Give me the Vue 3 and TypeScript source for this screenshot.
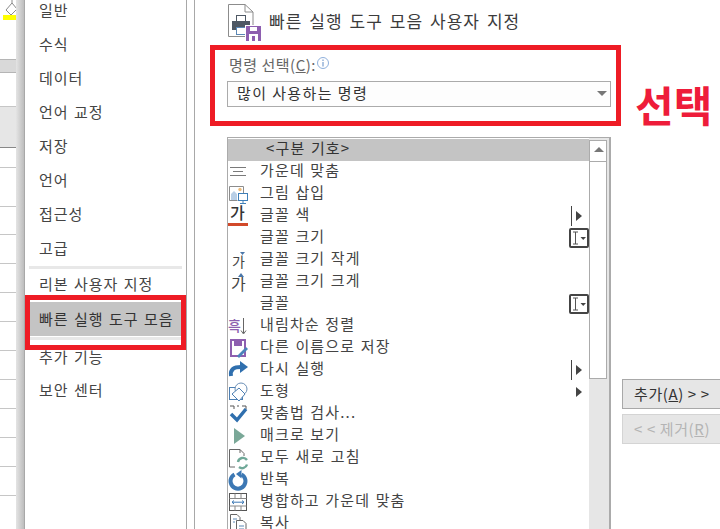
<script setup lang="ts">
interface Cmd { label: string; icon: string; mark?: string; selected?: boolean }

const navTop: string[] = ['일반', '수식', '데이터', '언어 교정', '저장', '언어', '접근성', '고급']
const navBottom: string[] = ['추가 기능', '보안 센터']
const sheetRows: { h: number; kind: string }[] = [
  { h: 60, kind: 'tool' }, { h: 13, kind: 'head' }, { h: 34, kind: '' }, { h: 41, kind: 'tint' },
  { h: 20, kind: '' }, { h: 39, kind: '' }, { h: 28, kind: '' }, { h: 29, kind: '' },
  { h: 29, kind: '' }, { h: 29, kind: '' }, { h: 29, kind: '' }, { h: 29, kind: '' },
  { h: 29, kind: '' }, { h: 29, kind: '' }, { h: 29, kind: '' }, { h: 29, kind: '' },
]
const commands: Cmd[] = [
  { label: '<구분 기호>', icon: '', selected: true },
  { label: '가운데 맞춤', icon: 'center' },
  { label: '그림 삽입', icon: 'picture' },
  { label: '글꼴 색', icon: 'color', mark: 'arrow' },
  { label: '글꼴 크기', icon: '', mark: 'beam' },
  { label: '글꼴 크기 작게', icon: 'smaller' },
  { label: '글꼴 크기 크게', icon: 'larger' },
  { label: '글꼴', icon: '', mark: 'beam' },
  { label: '내림차순 정렬', icon: 'sort' },
  { label: '다른 이름으로 저장', icon: 'saveas' },
  { label: '다시 실행', icon: 'redo', mark: 'arrow' },
  { label: '도형', icon: 'shape', mark: 'tri' },
  { label: '맞춤법 검사...', icon: 'spell' },
  { label: '매크로 보기', icon: 'macro' },
  { label: '모두 새로 고침', icon: 'refresh' },
  { label: '반복', icon: 'repeat' },
  { label: '병합하고 가운데 맞춤', icon: 'merge' },
  { label: '복사', icon: 'copy' },
]
</script>

<template>
  <div class="page">
    <aside class="sheet">
      <div
        v-for="(r, i) in sheetRows"
        :key="i"
        class="sheet-row"
        :class="r.kind"
        :style="{ height: r.h + 'px' }"
      >
        <template v-if="r.kind === 'tool'">
          <svg class="bucket" width="16" height="20" viewBox="0 0 16 20">
            <path d="M3 10 L9 3 L14 9 L8 15 Z" fill="#fff" stroke="#8a8a8a" />
            <path d="M9 3 V0" stroke="#8a8a8a" />
          </svg>
          <span class="yellow"></span>
        </template>
      </div>
    </aside>

    <nav class="nav">
      <ul class="nav-list nav-top">
        <li v-for="n in navTop" :key="n">{{ n }}</li>
      </ul>
      <div class="nav-sep"></div>
      <div class="nav-item ribbon">리본 사용자 지정</div>
      <div class="nav-item current"><span>빠른 실행 도구 모음</span></div>
      <ul class="nav-list nav-bottom">
        <li v-for="n in navBottom" :key="n">{{ n }}</li>
      </ul>
      <div class="nav-mark"></div>
    </nav>

    <main class="main">
      <header class="head">
        <svg class="head-icon" width="36" height="38" viewBox="0 0 36 38">
          <path d="M.5.5 H17 L25 8 V32.5 H.5 Z" fill="#fff" stroke="#8c8c8c" />
          <path d="M17 .5 V8 H25" fill="none" stroke="#8c8c8c" />
          <rect x="8.5" y="11.5" width="9" height="6" fill="#fff" stroke="#4e5864" />
          <path d="M4 17 H22 V26 H18 V29 H8 V26 H4 Z" fill="#4e5864" />
          <rect x="8.5" y="23.5" width="10" height="7" fill="#fff" stroke="#5a87b5" />
          <rect x="17" y="21" width="18" height="17" fill="#fff" />
          <path d="M18 22 H33 V37 H18 Z" fill="#8e5fb0" />
          <rect x="22" y="23" width="7" height="4" fill="#fff" />
          <rect x="21" y="30" width="9" height="7" fill="#fff" />
          <rect x="24" y="32" width="3" height="5" fill="#8e5fb0" />
        </svg>
        <h1>빠른 실행 도구 모음 사용자 지정</h1>
      </header>

      <section class="picker">
        <label class="picker-label">
          명령 선택(<u>C</u>):<svg class="info" width="14" height="14" viewBox="0 0 14 14">
            <circle cx="7" cy="7" r="5.5" fill="#fff" stroke="#8fb0dc" />
            <path d="M7 6 V10.5 M7 3.5 V5" stroke="#5f8ac4" fill="none" />
          </svg>
        </label>
        <div class="select">
          <span>많이 사용하는 명령</span>
          <i class="caret"></i>
        </div>
        <div class="picker-mark"></div>
        <strong class="picker-note">선택</strong>
      </section>

      <div class="lower">
        <div class="list">
          <ul class="rows">
            <li v-for="c in commands" :key="c.label" class="row" :class="{ selected: c.selected }">
              <span class="ico">
                <svg v-if="c.icon === 'center'" width="20" height="22" viewBox="0 0 20 22">
                  <path d="M2 6.5 H18 M5 10.5 H15 M2 14.5 H18" stroke="#7a7a7a" fill="none" />
                </svg>
                <svg v-else-if="c.icon === 'picture'" width="20" height="22" viewBox="0 0 20 22">
                  <path d="M9.5 17.5 H1.5 V3.5 H15.5 V10" fill="#fff" stroke="#8c8c8c" />
                  <circle cx="12" cy="6.5" r="1.7" fill="#eebb77" />
                  <path d="M3 17 V11 L6 8 L9 11 V17 Z" fill="#b9cfe6" />
                  <rect x="10.5" y="10.5" width="9" height="7" fill="#fff" stroke="#3f7fb8" />
                  <path d="M15 17.5 V20 M12 20.5 H18" stroke="#3f7fb8" fill="none" />
                </svg>
                <svg v-else-if="c.icon === 'color'" width="20" height="22" viewBox="0 0 20 22">
                  <text x="2" y="14" class="svgt" font-size="16" font-weight="500" fill="#333">가</text>
                  <rect x="0" y="18" width="20" height="3" fill="#d2492a" />
                </svg>
                <svg v-else-if="c.icon === 'smaller'" width="20" height="22" viewBox="0 0 20 22">
                  <text x="4" y="18" class="svgt" font-size="14" fill="#444">가</text>
                  <path d="M12 3 H17 L14.5 6 Z" fill="#4a76a8" />
                </svg>
                <svg v-else-if="c.icon === 'larger'" width="20" height="22" viewBox="0 0 20 22">
                  <text x="3" y="19" class="svgt" font-size="16" fill="#444">가</text>
                  <path d="M10 6 H16 L13 2 Z" fill="#4a76a8" />
                </svg>
                <svg v-else-if="c.icon === 'sort'" width="20" height="22" viewBox="0 0 20 22">
                  <text x="0" y="16" class="svgt" font-size="14" font-weight="500" fill="#8e5fb0">흑</text>
                  <path d="M15.5 3 V18 M13 15.5 L15.5 19 L18 15.5" stroke="#666" fill="none" />
                </svg>
                <svg v-else-if="c.icon === 'saveas'" width="20" height="22" viewBox="0 0 20 22">
                  <path d="M3 3 H17 V19 H3 Z" fill="#fff" stroke="#8e5fb0" stroke-width="2" />
                  <rect x="6" y="3" width="8" height="6" fill="#8e5fb0" />
                  <path d="M9 19 L18 10 L20 12 L11 21 Z" fill="#4a84bb" />
                </svg>
                <svg v-else-if="c.icon === 'redo'" width="20" height="22" viewBox="0 0 20 22">
                  <path d="M3 17 C2 10 6 8 13 8" fill="none" stroke="#2f6fae" stroke-width="4" />
                  <path d="M12 2 L20 8 L12 14 Z" fill="#2f6fae" />
                </svg>
                <svg v-else-if="c.icon === 'shape'" width="20" height="22" viewBox="0 0 20 22">
                  <rect x="1.5" y="6.5" width="13" height="12" fill="#fff" stroke="#4d7fb3" />
                  <circle cx="13" cy="8" r="6" fill="#fff" stroke="#6b8fb6" />
                  <path d="M4 13 L11 20 L17 13 L11 7 Z" fill="#fff" stroke="#4d7fb3" />
                </svg>
                <svg v-else-if="c.icon === 'spell'" width="20" height="22" viewBox="0 0 20 22">
                  <path d="M2 3 H6 V6 M9 3 H11 M14 3 H18 V6" stroke="#555" fill="none" />
                  <path d="M3 11 L9 17 L18 6" fill="none" stroke="#2f6fae" stroke-width="3.5" />
                </svg>
                <svg v-else-if="c.icon === 'macro'" width="20" height="22" viewBox="0 0 20 22">
                  <path d="M6 3 L17 11 L6 19 Z" fill="#7aa898" />
                </svg>
                <svg v-else-if="c.icon === 'refresh'" width="20" height="22" viewBox="0 0 20 22">
                  <path d="M7 20 H1.5 V2.5 H12 L16 6.5 V9" fill="#fff" stroke="#666" />
                  <path d="M12 6 V2.5" fill="none" stroke="#666" />
                  <path d="M10 15 A5 5 0 0 1 19 13 M19 17.5 A5 5 0 0 1 11 20" fill="none" stroke="#6fa898" stroke-width="2.4" />
                </svg>
                <svg v-else-if="c.icon === 'repeat'" width="20" height="22" viewBox="0 0 20 22">
                  <path d="M6.5 5.5 A7.5 7.5 0 1 0 13.5 5.5" fill="none" stroke="#3c78b4" stroke-width="4" />
                  <path d="M13.5 1 V9.5 L8 5 Z" fill="#3c78b4" />
                </svg>
                <svg v-else-if="c.icon === 'merge'" width="20" height="22" viewBox="0 0 20 22">
                  <rect x="1.5" y="2.5" width="17" height="17" fill="#fff" stroke="#555" />
                  <path d="M1.5 7.5 H18.5 M1.5 15 H18.5 M7 2.5 V7.5 M13 2.5 V7.5 M7 15 V19.5 M13 15 V19.5" stroke="#888" fill="none" />
                  <path d="M4 11.2 H16 M6 9.5 L4 11.2 L6 13 M14 9.5 L16 11.2 L14 13" stroke="#3c78b4" fill="none" />
                </svg>
                <svg v-else-if="c.icon === 'copy'" width="20" height="22" viewBox="0 0 20 22">
                  <path d="M2.5 1.5 H9 L12 4.5 V17 H2.5 Z" fill="#fff" stroke="#666" />
                  <path d="M8.5 7.5 H15 L18 10.5 V21 H8.5 Z" fill="#fff" stroke="#666" />
                  <path d="M5 6 H9 M5 9 H7 M11 13 H16 M11 16 H16" stroke="#5a87b5" fill="none" />
                </svg>
              </span>
              <span class="row-text">{{ c.label }}</span>
              <span v-if="c.mark === 'arrow'" class="m-arrow"></span>
              <span v-else-if="c.mark === 'tri'" class="m-tri"></span>
              <span v-else-if="c.mark === 'beam'" class="m-beam">
                <svg width="20" height="20" viewBox="0 0 20 20">
                  <rect x="1" y="1" width="18" height="18" rx="1" fill="#fff" stroke="#444" stroke-width="2" />
                  <path d="M4 4 H9 M4 16 H9 M6.5 4 V16" stroke="#555" fill="none" />
                  <path d="M11.5 9 H17 L14.2 12 Z" fill="#444" />
                </svg>
              </span>
            </li>
          </ul>
          <div class="scroll">
            <div class="scroll-up"><i></i></div>
            <div class="scroll-thumb"></div>
          </div>
        </div>

        <div class="actions">
          <button class="btn" type="button">추가(<u>A</u>) &gt; &gt;</button>
          <button class="btn off" type="button">&lt; &lt; 제거(<u>R</u>)</button>
        </div>
      </div>
    </main>
  </div>
</template>

<style scoped>
.page {
  position: relative;
  display: flex;
  width: 720px;
  height: 529px;
  overflow: hidden;
  background: #fff;
  color: #444;
  font-family: "Noto Sans CJK KR", "Noto Sans", sans-serif;
  font-size: 15px;
}
.sheet {
  position: relative;
  flex: none;
  width: 24px;
  background: #fff;
}
.sheet::after {
  content: "";
  position: absolute;
  top: 0;
  bottom: 0;
  left: 16px;
  width: 8px;
  background: linear-gradient(90deg, #e4e4e4, #bdbdbd);
}
.sheet-row {
  position: relative;
  box-sizing: border-box;
  border-bottom: 1px solid #c6c6c6;
}
.sheet-row.tool { border-bottom: 1px solid #b5b5b5; }
.sheet-row.head { background: #d9d9d9; border-bottom-color: #b5b5b5; }
.sheet-row.tint { background: #e6e6e6; border-bottom-color: #888; }
.bucket { position: absolute; left: 3px; top: 0; }
.yellow {
  position: absolute;
  left: 3px;
  top: 15px;
  width: 13px;
  height: 5px;
  background: #ffff00;
}
.nav {
  position: relative;
  flex: none;
  box-sizing: border-box;
  width: 163px;
  height: 529px;
  border-left: 1px solid #a8a8a8;
  border-right: 1px solid #a8a8a8;
  background: #fff;
}
.nav-list { list-style: none; margin: 0; padding: 0; }
.nav-list li {
  height: 34px;
  line-height: 34px;
  padding-left: 14px;
  letter-spacing: 1px;
  word-spacing: 1px;
  white-space: nowrap;
}
.nav-top { margin-top: -7px; margin-bottom: 1px; }
.nav-sep {
  height: 3px;
  margin: 0 4px 0 4px;
  background: #e8e8e8;
}
.nav-item {
  letter-spacing: 1px;
  word-spacing: 1px;
  white-space: nowrap;
  padding-left: 14px;
}
.ribbon { height: 30px; line-height: 30px; }
.current {
  box-sizing: border-box;
  height: 41px;
  margin: 0 4px 0 5px;
  padding: 3px 0 3px 9px;
  border-bottom: 3px solid #e8e8e8;
  color: #333;
}
.current span {
  display: block;
  height: 34px;
  margin-left: -9px;
  padding-left: 9px;
  line-height: 34px;
  background: #c4c4c4;
}
.nav-bottom li:first-child { height: 33px; line-height: 33px; }
.nav-mark {
  position: absolute;
  left: 0;
  right: 0;
  top: 295px;
  height: 55px;
  box-sizing: border-box;
  border: 5px solid #ee1c25;
}
.main {
  flex: 1;
  min-width: 0;
  margin-left: 7px;
  border-left: 1px solid #a8a8a8;
  padding-left: 32px;
}
.head {
  position: relative;
  height: 45px;
}
.head-icon {
  position: absolute;
  left: 1px;
  top: 4px;
}
.head h1 {
  margin: 0;
  padding-left: 42px;
  font-size: 17px;
  font-weight: 400;
  line-height: 42px;
  letter-spacing: 1.05px;
  word-spacing: 2px;
  white-space: nowrap;
  color: #3c3c3c;
}
.picker {
  position: relative;
  width: 384px;
  height: 92px;
}
.picker-label {
  display: block;
  height: 36px;
  padding-left: 2px;
  line-height: 40px;
  font-size: 15px;
  letter-spacing: .5px;
  white-space: nowrap;
  color: #666;
}
.info { vertical-align: 1px; }
.select {
  position: relative;
  box-sizing: border-box;
  width: 384px;
  height: 26px;
  padding-left: 9px;
  border: 1px solid #ababab;
  background: #fdfdfd;
  line-height: 22px;
  letter-spacing: 1.4px;
  color: #333;
}
.caret {
  position: absolute;
  right: 3px;
  top: 9px;
  width: 0;
  height: 0;
  border-left: 5px solid transparent;
  border-right: 5px solid transparent;
  border-top: 5px solid #777;
}
.picker-mark {
  position: absolute;
  left: -17px;
  top: 0;
  width: 411px;
  height: 81px;
  box-sizing: border-box;
  border: 5px solid #ee1c25;
}
.picker-note {
  position: absolute;
  left: 408px;
  top: 30px;
  font-size: 42px;
  font-weight: 700;
  line-height: 58px;
  letter-spacing: 0;
  white-space: nowrap;
  color: #ee1c3a;
}
.lower {
  display: flex;
  align-items: flex-start;
  gap: 11px;
}
.list {
  box-sizing: border-box;
  display: flex;
  flex: none;
  width: 384px;
  height: 400px;
  padding-top: 1px;
  border: 1px solid #ababab;
  border-bottom: 0;
}
.rows {
  flex: 1;
  min-width: 0;
  margin: 0;
  padding: 0;
  list-style: none;
}
.row {
  display: flex;
  align-items: center;
  height: 22px;
  white-space: nowrap;
  position: relative;
}
.row.selected { background: #c4c4c4; color: #333; }
.row.selected .row-text { margin-left: 6px; }
.ico {
  flex: none;
  display: block;
  width: 20px;
  height: 22px;
  margin-right: 12px;
}
.ico svg { display: block; overflow: visible; }
.svgt { font-family: "Noto Sans CJK KR", sans-serif; }
.row-text {
  padding-bottom: 4px;
  letter-spacing: 1.15px;
  word-spacing: 1px;
  line-height: 22px;
}
.m-arrow {
  position: absolute;
  left: 343px;
  top: 1px;
  width: 1px;
  height: 20px;
  background: #444;
}
.m-arrow::after, .m-tri::after {
  content: "";
  position: absolute;
  left: 5px;
  top: 5px;
  border-top: 5px solid transparent;
  border-bottom: 5px solid transparent;
  border-left: 6px solid #444;
}
.m-tri {
  position: absolute;
  left: 343px;
  top: 1px;
  width: 1px;
  height: 20px;
}
.m-beam {
  position: absolute;
  right: 0;
  top: 1px;
  width: 20px;
  height: 20px;
}
.m-beam svg { display: block; }
.scroll {
  flex: none;
  box-sizing: border-box;
  width: 21px;
  margin-top: -1px;
  padding-right: 2px;
  background: #e6e6e6;
  border-right: 1px solid #ababab;
}
.scroll-up {
  position: relative;
  box-sizing: border-box;
  height: 22px;
  margin-top: 2px;
  border: 1px solid #ababab;
  background: #fff;
}
.scroll-up i {
  position: absolute;
  left: 4px;
  top: 6px;
  width: 0;
  height: 0;
  border-left: 5px solid transparent;
  border-right: 5px solid transparent;
  border-bottom: 5px solid #777;
}
.scroll-thumb {
  box-sizing: border-box;
  height: 217px;
  border: 1px solid #ababab;
  border-top: 0;
  background: #fff;
}
.actions {
  display: flex;
  flex-direction: column;
  flex: none;
  gap: 5px;
  margin-top: 242px;
}
.btn {
  box-sizing: border-box;
  width: 110px;
  height: 30px;
  padding: 0 0 2px 11px;
  border: 1px solid #a8a8a8;
  background: #e6e6e6;
  color: #333;
  font: inherit;
  letter-spacing: .6px;
  text-align: left;
  white-space: nowrap;
}
.btn.off {
  border-color: #d4d4d4;
  background: #e6e6e6;
  color: #b4b4b4;
}
</style>
